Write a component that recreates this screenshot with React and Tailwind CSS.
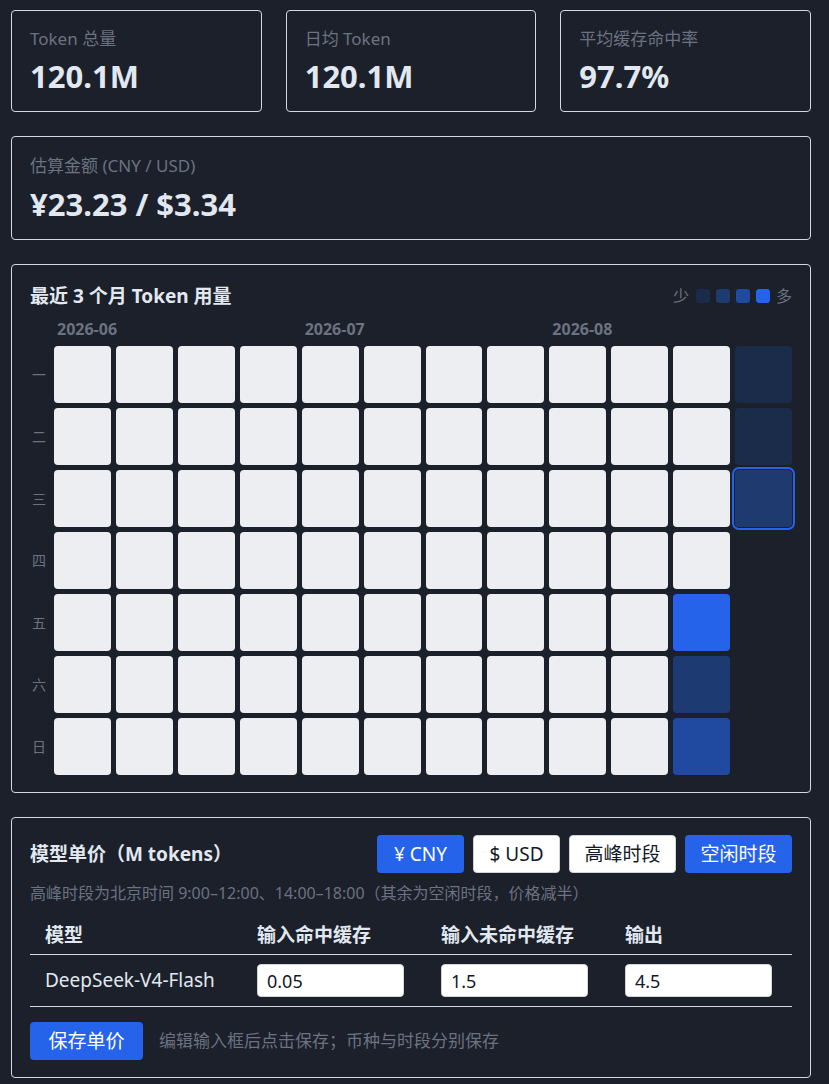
import React from 'react';

const stats = [
  { label: 'Token 总量', value: '120.1M' },
  { label: '日均 Token', value: '120.1M' },
  { label: '平均缓存命中率', value: '97.7%' },
];

const weekdays = ['一', '二', '三', '四', '五', '六', '日'];

// only the last two weeks have usage; the rest are light empty cells
const special = {
  '10-4': 'bg-[#2563eb]',
  '10-5': 'bg-[#1e3a72]',
  '10-6': 'bg-[#1f4a9f]',
  '11-0': 'bg-[#1b2c4b]',
  '11-1': 'bg-[#1b2c4b]',
  '11-2': 'bg-[#1e3a6e] ring-2 ring-[#2563eb] ring-offset-1 ring-offset-[#1b202b]',
};

function Cell({ col, row }) {
  if (col === 11 && row > 2) return <div className="h-[57px]" />;
  const cls = special[`${col}-${row}`] || 'bg-[#eceef1]';
  return <div className={`h-[57px] rounded-[4px] ${cls}`} />;
}

function Heatmap() {
  return (
    <div className="rounded-[4px] border border-[#d3d7de] px-[18px] pt-[17px] pb-[17px]">
      <div className="flex h-[28px] items-center justify-between">
        <h2 className="text-[19px] font-bold text-[#e2e8f0]">最近 3 个月 Token 用量</h2>
        <div className="flex items-center gap-[6px] text-[16px] text-[#6b7280]">
          <span className="mr-[1px]">少</span>
          <span className="h-[14px] w-[14px] rounded-[3px] bg-[#1b2c4b]" />
          <span className="h-[14px] w-[14px] rounded-[3px] bg-[#1e3a6e]" />
          <span className="h-[14px] w-[14px] rounded-[3px] bg-[#1f4a9f]" />
          <span className="h-[14px] w-[14px] rounded-[3px] bg-[#2563eb]" />
          <span>多</span>
        </div>
      </div>
      <div className="mt-[9px] ml-[24px] grid h-[20px] grid-cols-12 gap-[5px] text-[16px] font-bold leading-[20px] text-[#6b7280]">
        <span className="col-span-4 pl-[3px]">2026-06</span>
        <span className="col-span-4 pl-[3px]">2026-07</span>
        <span className="col-span-4 pl-[3px]">2026-08</span>
      </div>
      <div className="mt-[7px] flex gap-[6px]">
        <div className="grid w-[18px] grid-rows-7 gap-[5px]">
          {weekdays.map((d) => (
            <div key={d} className="flex h-[57px] items-center justify-center text-[14px] text-[#6b7280]">{d}</div>
          ))}
        </div>
        <div className="grid flex-1 grid-flow-col grid-cols-12 grid-rows-7 gap-[5px]">
          {Array.from({ length: 12 }).map((_, c) =>
            Array.from({ length: 7 }).map((_, r) => <Cell key={`${c}-${r}`} col={c} row={r} />)
          )}
        </div>
      </div>
    </div>
  );
}

function Pricing() {
  return (
    <div className="rounded-[4px] border border-[#d3d7de] px-[18px] pt-[17px] pb-[17px]">
      <div className="flex items-center justify-between">
        <h2 className="text-[19px] font-bold text-[#e2e8f0]">模型单价（M tokens）</h2>
        <div className="flex gap-[9px] text-[19px]">
          <button className="h-[38px] w-[87px] rounded-[4px] bg-[#2563eb] text-white">¥ CNY</button>
          <button className="h-[38px] w-[87px] rounded-[4px] border border-[#d1d5db] bg-white text-[#111827]">$ USD</button>
          <button className="h-[38px] w-[107px] rounded-[4px] border border-[#d1d5db] bg-white text-[#111827]">高峰时段</button>
          <button className="h-[38px] w-[107px] rounded-[4px] bg-[#2563eb] text-white">空闲时段</button>
        </div>
      </div>
      <p className="mt-[8px] text-[16px] leading-[24px] text-[#6b7280]">高峰时段为北京时间 9:00–12:00、14:00–18:00（其余为空闲时段，价格减半）</p>
      <div className="mt-[17px]">
        <div className="grid grid-cols-[212px_184px_184px_1fr] border-b border-[#d3d7de] pb-[6px] text-[19px] font-bold leading-[26px] text-[#e2e8f0]">
          <span className="pl-[15px]">模型</span>
          <span className="pl-[15px]">输入命中缓存</span>
          <span className="pl-[15px]">输入未命中缓存</span>
          <span className="pl-[15px]">输出</span>
        </div>
        <div className="grid grid-cols-[212px_184px_184px_1fr] items-center border-b border-[#d3d7de] py-[9px] text-[19px] text-[#e2e8f0]">
          <span className="pl-[15px]">DeepSeek-V4-Flash</span>
          {['0.05', '1.5', '4.5'].map((v) => (
            <div key={v} className="pl-[15px]">
              <input
                defaultValue={v}
                className="h-[33px] w-[147px] rounded-[4px] border border-[#d1d5db] bg-white px-[9px] text-[18px] text-[#111827] outline-none"
              />
            </div>
          ))}
        </div>
      </div>
      <div className="mt-[15px] flex items-center gap-[16px]">
        <button className="h-[38px] w-[113px] rounded-[4px] bg-[#2563eb] text-[19px] text-white">保存单价</button>
        <span className="text-[17px] text-[#6b7280]">编辑输入框后点击保存；币种与时段分别保存</span>
      </div>
    </div>
  );
}

export default function App() {
  return (
    <div className="min-h-screen bg-[#1b202b] pt-[10px] pl-[11px] pr-[18px] font-['Noto_Sans','Noto_Sans_CJK_SC',sans-serif]">
      <div className="flex w-[800px] flex-col gap-[24px]">
        <div className="grid grid-cols-3 gap-[24px]">
          {stats.map((s) => (
            <div key={s.label} className="rounded-[4px] border border-[#d3d7de] px-[18px] pt-[16px] pb-[17px]">
              <div className="text-[17px] leading-[24px] text-[#6b7280]">{s.label}</div>
              <div className="mt-[7px] text-[31px] font-bold leading-[36px] text-[#e2e8f0]">{s.value}</div>
            </div>
          ))}
        </div>
        <div className="rounded-[4px] border border-[#d3d7de] px-[18px] pt-[17px] pb-[17px]">
          <div className="text-[17px] leading-[24px] text-[#6b7280]">估算金额 (CNY / USD)</div>
          <div className="mt-[8px] text-[31px] font-bold leading-[36px] text-[#e2e8f0]">¥23.23 / $3.34</div>
        </div>
        <Heatmap />
        <Pricing />
      </div>
    </div>
  );
}
